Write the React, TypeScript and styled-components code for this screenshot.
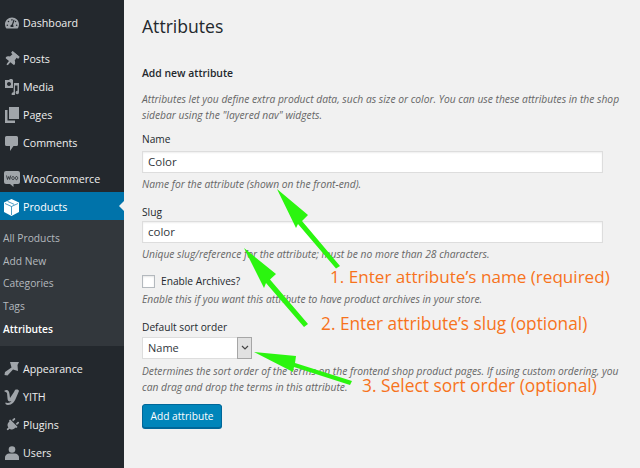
import React from 'react';
import styled, { createGlobalStyle } from 'styled-components';
import { FaPlug, FaThumbtack, FaTachometerAlt } from 'react-icons/fa';

const Global = createGlobalStyle`
  html, body { margin: 0; padding: 0; background: #f1f1f1; overflow: hidden; }
  body { font-family: "Open Sans", sans-serif; }
`;
const Page = styled.div`
  position: relative; width: 640px; height: 468px; display: flex; overflow: hidden; background: #f1f1f1;
`;
const Sidebar = styled.nav`
  width: 124px; height: 468px; flex: none; background: #23282d; padding-top: 8px; box-sizing: border-box;
`;
const Row = styled.div<{ $active?: boolean; $gap?: number }>`
  height: 28px; box-sizing: border-box; padding-top: 2px; display: flex; align-items: center; font-size: 10.7px; color: ${p => (p.$active ? '#fff' : '#eee')};
  background: ${p => (p.$active ? '#0073aa' : 'transparent')}; margin-top: ${p => p.$gap ?? 0}px; position: relative;
`;
const IconSlot = styled.span<{ $active?: boolean }>`
  width: 23px; display: flex; justify-content: center; align-items: center; color: ${p => (p.$active ? '#fff' : '#a0a5aa')};
`;
const Pin = styled(FaThumbtack)`
  transform: rotate(40deg);
`;
const Plug = styled(FaPlug)`
  transform: rotate(45deg);
`;
const Notch = styled.span`
  position: absolute; right: 0; top: 9px; border: 5px solid transparent; border-right-color: #f1f1f1; border-left: 0;
`;
const Sub = styled.div`
  background: #32373c; padding: 7px 0 6px; height: 126px; box-sizing: border-box;
`;
const SubItem = styled.div<{ $current?: boolean }>`
  height: 22.7px; line-height: 22.7px; padding-left: 3px; font-size: 10.25px;
  color: ${p => (p.$current ? '#fff' : '#b4b9be')}; font-weight: ${p => (p.$current ? 600 : 400)};
`;
const Main = styled.main`
  flex: 1; padding: 13px 37px 0 18px; color: #23282d; min-width: 0;
`;
const Title = styled.h1`
  margin: 0 0 26px; font-size: 17.6px; line-height: 26px; font-weight: 400;
`;
const Section = styled.h2`
  margin: 0 0 10px; font-size: 10.4px; line-height: 16px; font-weight: 600; color: #23282d;
`;
const Note = styled.p<{ $top?: number }>`
  margin: ${p => p.$top ?? 0}px 0 0; font-size: 10.27px; line-height: 16px; font-style: italic; color: #666;
  white-space: nowrap;
`;
const Label = styled.label<{ $top: number }>`
  display: block; margin-top: ${p => p.$top}px; font-size: 10.2px; line-height: 16px; color: #23282d;
`;
const Input = styled.div<{ $top: number }>`
  margin-top: ${p => p.$top}px; height: 22px; box-sizing: border-box; border: 1px solid #ddd; background: #fff; width: 461px;
  box-shadow: inset 0 1px 2px rgba(0,0,0,.07); padding-left: 5px; font-size: 11.5px; line-height: 20px; color: #32373c;
`;
const CheckRow = styled.div`
  margin-top: 12px; display: flex; align-items: center; gap: 6px; font-size: 10.2px; line-height: 14px; color: #23282d;
`;
const Check = styled.span`
  width: 13px; height: 13px; box-sizing: border-box; border: 1px solid #b4b9be; background: #fff; box-shadow: inset 0 1px 2px rgba(0,0,0,.1);
`;
const Select = styled.div`
  margin-top: 2px; width: 110px; height: 22px; box-sizing: border-box; border: 1px solid #ddd; background: #fff; display: flex;
  font-size: 11px; line-height: 20px; color: #32373c;
`;
const SelectText = styled.span`
  flex: 1; padding-left: 5px;
`;
const SelectButton = styled.span`
  width: 13px; background: #e1e1e1; border: 1px solid #a6a6a6; margin: -1px -1px; display: flex; align-items: center; justify-content: center;
`;
const Button = styled.div`
  margin-top: 9px; width: 80px; height: 24px; box-sizing: border-box; border: 1px solid #006799; border-radius: 3px;
  background: #0085ba; color: #fff; font-size: 10.2px; line-height: 22px; text-align: center;
  box-shadow: 0 1px 0 #006799;
`;
const Callout = styled.div<{ $x: number; $y: number; $size: number }>`
  position: absolute; left: ${p => p.$x}px; top: ${p => p.$y}px; font-size: ${p => p.$size}px; line-height: 12px; color: #f7731c; white-space: nowrap;
`;
const Arrows = styled.svg`
  position: absolute; inset: 0; pointer-events: none;
`;

const Cube = () => (
  <svg width="15" height="17" viewBox="0 0 15 17"><path d="M7.5 0 15 3.500v9.500l-7.500 4L0 13V3.500z" fill="#fff" /><path d="M1 4.500l6.500 3L14 4.500M7.500 7.500V16" stroke="#0073aa" fill="none" strokeWidth=".7" /><path d="M3.600 2.400l6.600 3" stroke="#0073aa" fill="none" strokeWidth=".7" /></svg>
);
const Woo = () => (
  <svg width="16" height="16" viewBox="0 0 16 16"><rect width="16" height="13" rx="2" fill="#a0a5aa" /><path d="M6 13l3.500 3v-3z" fill="#a0a5aa" /><path d="M2.500 4.500l1 4 1.200-3 1 3 1-4M9 5.500a1.200 1.600 0 1 0 .01 0M12.500 5.500a1.200 1.600 0 1 0 .01 0" stroke="#23282d" strokeWidth=".8" fill="none" /></svg>
);
const Dash = () => <FaTachometerAlt size={14} />;
const MediaIcon = () => (
  <svg width="16" height="16" viewBox="0 0 16 16" fill="#a0a5aa"><path fillRule="evenodd" d="M1 1h4l1-1h2l1 1v8H1zM5 3a2 2 0 1 0 .01 0z" /><path d="M10 4h5v9.500a1.700 1.700 0 1 1-1.500-1.700V6.500h-2.500V15a1.700 1.700 0 1 1-1.500-1.700z" /></svg>
);
const PagesIcon = () => (
  <svg width="15" height="16" viewBox="0 0 15 16" fill="#a0a5aa"><path d="M5 0h10v12H5z" /><path d="M1 3h2.500v10.500H11V16H1z" /></svg>
);
const CommentIcon = () => (
  <svg width="13" height="15" viewBox="0 0 13 15" fill="#a0a5aa"><path d="M1.500 0h10A1.500 1.500 0 0 1 13 1.500v7a1.500 1.500 0 0 1-1.500 1.500H8.500L5 15v-5H1.500A1.500 1.500 0 0 1 0 8.500v-7A1.500 1.500 0 0 1 1.500 0z" /></svg>
);
const BrushIcon = () => (
  <svg width="15" height="14" viewBox="0 0 15 14" fill="#a0a5aa"><path d="M6 0H15L13.500 3 14 9 9 7.500 3.500 13.500.5 13 1 10 7.500 5.500z" /></svg>
);
const YithIcon = () => (
  <svg width="15" height="16" viewBox="0 0 15 16" fill="#a0a5aa"><path d="M0 2c3-2 5-1 5.500 3L6 9l4-6 1-2c2-1 4 0 4 1l-3 7c-1.500 4-4 7-8 7-2 0-3-1-2.500-2.500 2 1 5 .5 6-1.500-2 1-4 0-4-2.500L3 4C2.500 3 1 3 0 2z" /></svg>
);
const UserIcon = () => (
  <svg width="14" height="14" viewBox="0 0 14 14" fill="#a0a5aa"><circle cx="7" cy="3.500" r="3.300" /><path d="M0 14v-2.500C0 9 2.500 7.500 4.500 7.500h5c2 0 4.500 1.500 4.500 4V14z" /></svg>
);

const upper: [React.ReactNode, string, number?][] = [
  [<Dash />, 'Dashboard'],
  [<Pin size={15} />, 'Posts', 8],
  [<MediaIcon />, 'Media'],
  [<PagesIcon />, 'Pages'],
  [<CommentIcon />, 'Comments'],
];
const lower: [React.ReactNode, string][] = [
  [<YithIcon />, 'YITH'],
  [<Plug size={14} />, 'Plugins'],
  [<UserIcon />, 'Users'],
];

export default function App() {
  return (
    <Page>
      <Global />
      <Sidebar>
        {upper.map(([ic, t, g]) => (
          <Row key={t} $gap={g}><IconSlot>{ic}</IconSlot>{t}</Row>
        ))}
        <Row $gap={8}><IconSlot><Woo /></IconSlot>WooCommerce</Row>
        <Row $active><IconSlot $active><Cube /></IconSlot>Products<Notch /></Row>
        <Sub>
          {['All Products', 'Add New', 'Categories', 'Tags'].map(s => <SubItem key={s}>{s}</SubItem>)}
          <SubItem $current>Attributes</SubItem>
        </Sub>
        <Row $gap={8}><IconSlot><BrushIcon /></IconSlot>Appearance</Row>
        {lower.map(([ic, t]) => (
          <Row key={t}><IconSlot>{ic}</IconSlot>{t}</Row>
        ))}
      </Sidebar>
      <Main>
        <Title>Attributes</Title>
        <Section>Add new attribute</Section>
        <Note>Attributes let you define extra product data, such as size or color. You can use these attributes in the shop</Note>
        <Note>sidebar using the "layered nav" widgets.</Note>
        <Label $top={8}>Name</Label>
        <Input $top={4}>Color</Input>
        <Note $top={3}>Name for the attribute (shown on the front-end).</Note>
        <Label $top={12}>Slug</Label>
        <Input $top={1}>color</Input>
        <Note $top={3}>Unique slug/reference for the attribute; must be no more than 28 characters.</Note>
        <CheckRow><Check />Enable Archives?</CheckRow>
        <Note $top={3}>Enable this if you want this attribute to have product archives in your store.</Note>
        <Label $top={12}>Default sort order</Label>
        <Select>
          <SelectText>Name</SelectText>
          <SelectButton>
            <svg width="8" height="6" viewBox="0 0 8 6"><path d="M1 1l3 3 3-3" stroke="#444" strokeWidth="1.2" fill="none" /></svg>
          </SelectButton>
        </Select>
        <Note $top={4}>Determines the sort order of the terms on the frontend shop product pages. If using custom ordering, you</Note>
        <Note>can drag and drop the terms in this attribute.</Note>
        <Button>Add attribute</Button>
      </Main>
      <Arrows width="640" height="468" viewBox="0 0 640 468">
        <path d="M277 189 L308 215 L302 221 L340 266 L336 268.500 L298 224 L296 228z" fill="#2bf50f" />
        <path d="M244 248 L276 274 L270 279.500 L308 324 L304 327 L266 283 L264 288z" fill="#2bf50f" />
        <path d="M254 352 L296 356 L295 363 L352 381 L350 385 L294 367 L293 372z" fill="#2bf50f" />
      </Arrows>
      <Callout $x={330} $y={271} $size={17.1}>1. Enter attribute’s name (required)</Callout>
      <Callout $x={321} $y={318} $size={17.3}>2. Enter attribute’s slug (optional)</Callout>
      <Callout $x={362} $y={379} $size={17.4}>3. Select sort order (optional)</Callout>
    </Page>
  );
}
